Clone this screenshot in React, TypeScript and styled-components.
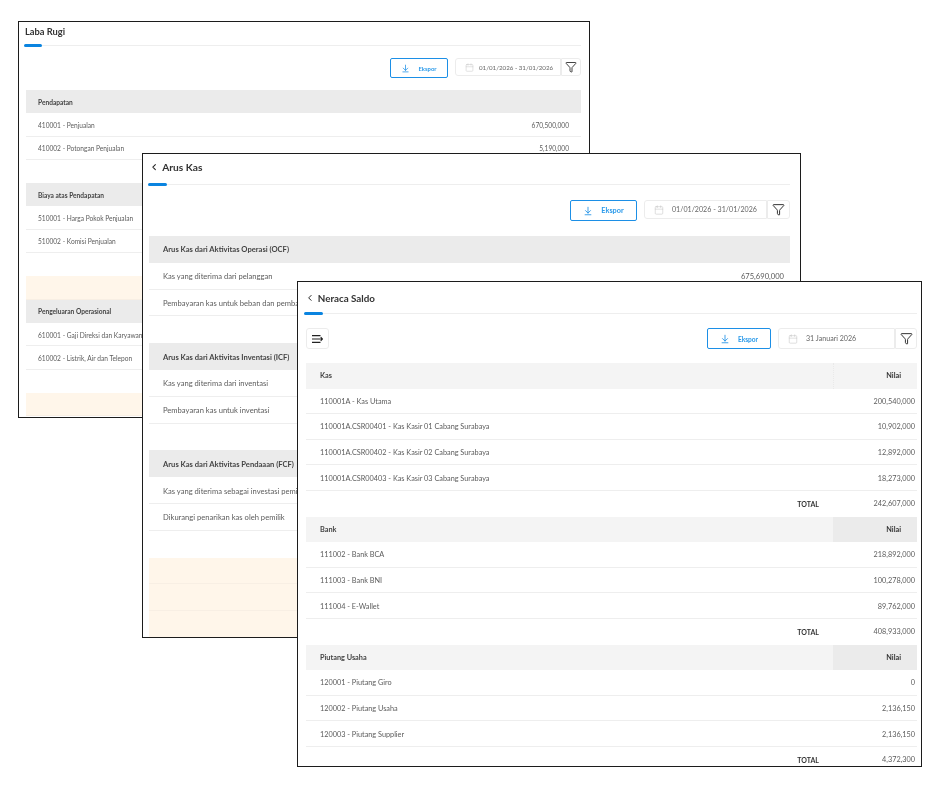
import React from 'react';
import styled, { createGlobalStyle } from 'styled-components';
import { ArrowDownToLine, Calendar, ChevronLeft, Funnel } from 'lucide-react';

const GlobalStyle = createGlobalStyle`
    html, body {
        margin: 0;
        padding: 0;
        background: #fff;
        font-family: Lato, "Open Sans", sans-serif;
    }
`;

interface Metrics
{
    x : number;
    y : number;
    w : number;
    h : number;
    row : number;
    font : number;
    title : number;
    titleH : number;
    titlePad : number;
    padL : number;
    padR : number;
    inset : number;
    cellPad : number;
    valuePad : number;
    toolTop : number;
    toolH : number;
    toolBottom : number;
    ekspor : number;
    eksporFont : number;
    date : number;
    dateFont : number;
    dateGap : number;
    dateTrim : number;
    filter : number;
    bar : number;
}

type RowData =
    | { kind : 'head'; label : string; nilai ?: 'plain' | 'dark' }
    | { kind : 'item'; label : string; value ?: string }
    | { kind : 'total'; value : string }
    | { kind : 'gap' }
    | { kind : 'peach' };

const Canvas = styled.div`
    position: relative;
    width: 940px;
    height: 786px;
    overflow: hidden;
`;

const Window = styled.section<{ $m : Metrics }>`
    position: absolute;
    left: ${p => p.$m.x}px;
    top: ${p => p.$m.y}px;
    width: ${p => p.$m.w}px;
    height: ${p => p.$m.h}px;
    box-sizing: border-box;
    display: flex;
    flex-direction: column;
    padding: 0 ${p => p.$m.padR}px 0 ${p => p.$m.padL}px;
    background: #fff;
    border: 1px solid #1c1c1c;
    overflow: hidden;
    color: #5c5c5c;
`;

const TitleBar = styled.header<{ $m : Metrics }>`
    position: relative;
    flex: none;
    display: flex;
    align-items: center;
    gap: 3px;
    box-sizing: border-box;
    height: ${p => p.$m.titleH}px;
    padding: 0 1px ${p => p.$m.titlePad}px;
    border-bottom: 1px solid #eeeeee;
    font-size: ${p => p.$m.title}px;
    font-weight: 700;
    color: #333;
    will-change: transform;

    &::after {
        content: '';
        position: absolute;
        left: 0;
        bottom: -2px;
        width: ${p => p.$m.bar}px;
        height: 3px;
        border-radius: 2px;
        background: #0a84e0;
    }
`;

const Back = styled(ChevronLeft)`
    flex: none;
    color: #222;
`;

const Toolbar = styled.div<{ $m : Metrics }>`
    flex: none;
    display: flex;
    align-items: stretch;
    height: ${p => p.$m.toolH}px;
    margin: ${p => p.$m.toolTop}px 0 ${p => p.$m.toolBottom}px ${p => p.$m.inset}px;
    will-change: transform;
`;

const MenuButton = styled.button`
    width: 23px;
    padding: 0;
    display: flex;
    align-items: center;
    justify-content: center;
    background: transparent;
    border: 1px solid #ececec;
    border-radius: 3px;
`;

const Spacer = styled.div`
    flex: 1;
`;

const ExportButton = styled.button<{ $m : Metrics }>`
    box-sizing: border-box;
    width: ${p => p.$m.ekspor}px;
    margin-right: 7px;
    padding: 0;
    display: flex;
    align-items: center;
    justify-content: center;
    gap: 8px;
    background: transparent;
    border: 1px solid #1c8fe6;
    border-radius: 2px;
    font-family: inherit;
    font-size: ${p => p.$m.eksporFont}px;
    font-weight: 700;
    color: #2b9aea;
`;

const DateField = styled.div<{ $m : Metrics }>`
    box-sizing: border-box;
    width: ${p => p.$m.date}px;
    margin-bottom: ${p => p.$m.dateTrim}px;
    display: flex;
    align-items: center;
    padding-left: 9px;
    gap: ${p => p.$m.dateGap}px;
    border: 1px solid #ececec;
    border-radius: 3px 0 0 3px;
    font-size: ${p => p.$m.dateFont}px;
    white-space: nowrap;
    color: #666;
`;

const FilterButton = styled.div<{ $m : Metrics }>`
    box-sizing: border-box;
    width: ${p => p.$m.filter}px;
    margin-bottom: ${p => p.$m.dateTrim}px;
    display: flex;
    align-items: center;
    justify-content: center;
    border: 1px solid #ececec;
    border-radius: 0 3px 3px 0;
    color: #222;
`;

const Table = styled.div<{ $m : Metrics }>`
    flex: none;
    display: flex;
    flex-direction: column;
    margin-left: ${p => p.$m.inset}px;
    will-change: transform;
`;

const BaseRow = styled.div<{ $m : Metrics }>`
    flex: none;
    box-sizing: border-box;
    height: ${p => p.$m.row}px;
    display: flex;
    align-items: center;
    font-size: ${p => p.$m.font}px;
    white-space: nowrap;
`;

const HeadRow = styled(BaseRow)<{ $light : boolean }>`
    padding-left: ${p => p.$m.cellPad}px;
    background: ${p => (p.$light ? '#f4f4f4' : '#ebebeb')};
    font-weight: 700;
    color: #444;
`;

const HeadLabel = styled.span`
    flex: 1;
`;

const NilaiCell = styled.span<{ $dark : boolean }>`
    align-self: stretch;
    box-sizing: border-box;
    width: 84px;
    display: flex;
    align-items: center;
    justify-content: flex-end;
    padding-right: 16px;
    background: ${p => (p.$dark ? '#ebebeb' : 'transparent')};
    border-left: ${p => (p.$dark ? 'none' : '1px dotted #e9e9e9')};
    color: #333;
`;

const ItemRow = styled(BaseRow)`
    padding: 1px ${p => p.$m.valuePad}px 0 ${p => p.$m.cellPad}px;
    border-bottom: 1px solid #eeeeee;
    justify-content: space-between;
`;

const TotalRow = styled(BaseRow)`
    justify-content: flex-end;
`;

const TotalLabel = styled.span`
    font-size: 7px;
    font-weight: 700;
    color: #333;
`;

const TotalValue = styled.span`
    box-sizing: border-box;
    width: 98px;
    padding-right: 2px;
    text-align: right;
`;

const GapRow = styled(BaseRow)``;

const PeachRow = styled(BaseRow)`
    background: #fff6ea;
    border-bottom: 1px solid #f8efe4;
`;

const labaRugi : Metrics = {
    x: 18, y: 21, w: 572, h: 397, row: 23.3, font: 6.6, title: 9.3, titleH: 24, titlePad: 4, padL: 5, padR: 8, inset: 2,
    cellPad: 12, valuePad: 12, toolTop: 12, toolH: 20, toolBottom: 12, ekspor: 58, eksporFont: 5.9, date: 106, dateFont: 6.2, dateGap: 5, dateTrim: 2, filter: 20, bar: 18,
};

const arusKas : Metrics = {
    x: 142, y: 153, w: 659, h: 485, row: 26.8, font: 7.6, title: 10.2, titleH: 31, titlePad: 4, padL: 5, padR: 10, inset: 1,
    cellPad: 14, valuePad: 6, toolTop: 15, toolH: 21, toolBottom: 15, ekspor: 67, eksporFont: 7.3, date: 123, dateFont: 7.1, dateGap: 8, dateTrim: 2, filter: 23, bar: 19,
};

const neracaSaldo : Metrics = {
    x: 297, y: 281, w: 625, h: 486, row: 25.6, font: 7.3, title: 9.8, titleH: 32, titlePad: 0, padL: 6, padR: 4, inset: 2,
    cellPad: 14, valuePad: 2, toolTop: 14, toolH: 21, toolBottom: 14, ekspor: 64, eksporFont: 6.6, date: 117, dateFont: 7.1, dateGap: 8, dateTrim: 0, filter: 22, bar: 19,
};

const labaRows : RowData[] = [
    { kind: 'head', label: 'Pendapatan' },
    { kind: 'item', label: '410001 - Penjualan', value: '670,500,000' },
    { kind: 'item', label: '410002 - Potongan Penjualan', value: '5,190,000' },
    { kind: 'gap' },
    { kind: 'head', label: 'Biaya atas Pendapatan' },
    { kind: 'item', label: '510001 - Harga Pokok Penjualan' },
    { kind: 'item', label: '510002 - Komisi Penjualan' },
    { kind: 'gap' },
    { kind: 'peach' },
    { kind: 'head', label: 'Pengeluaran Operasional' },
    { kind: 'item', label: '610001 - Gaji Direksi dan Karyawan' },
    { kind: 'item', label: '610002 - Listrik, Air dan Telepon' },
    { kind: 'gap' },
    { kind: 'peach' },
];

const arusRows : RowData[] = [
    { kind: 'head', label: 'Arus Kas dari Aktivitas Operasi (OCF)' },
    { kind: 'item', label: 'Kas yang diterima dari pelanggan', value: '675,690,000' },
    { kind: 'item', label: 'Pembayaran kas untuk beban dan pembayaran' },
    { kind: 'gap' },
    { kind: 'head', label: 'Arus Kas dari Aktivitas Inventasi (ICF)' },
    { kind: 'item', label: 'Kas yang diterima dari inventasi' },
    { kind: 'item', label: 'Pembayaran kas untuk inventasi' },
    { kind: 'gap' },
    { kind: 'head', label: 'Arus Kas dari Aktivitas Pendaaan (FCF)' },
    { kind: 'item', label: 'Kas yang diterima sebagai investasi pemilik' },
    { kind: 'item', label: 'Dikurangi penarikan kas oleh pemilik' },
    { kind: 'gap' },
    { kind: 'peach' },
    { kind: 'peach' },
    { kind: 'peach' },
];

const neracaRows : RowData[] = [
    { kind: 'head', label: 'Kas', nilai: 'plain' },
    { kind: 'item', label: '110001A - Kas Utama', value: '200,540,000' },
    { kind: 'item', label: '110001A.CSR00401 - Kas Kasir 01 Cabang Surabaya', value: '10,902,000' },
    { kind: 'item', label: '110001A.CSR00402 - Kas Kasir 02 Cabang Surabaya', value: '12,892,000' },
    { kind: 'item', label: '110001A.CSR00403 - Kas Kasir 03 Cabang Surabaya', value: '18,273,000' },
    { kind: 'total', value: '242,607,000' },
    { kind: 'head', label: 'Bank', nilai: 'dark' },
    { kind: 'item', label: '111002 - Bank BCA', value: '218,892,000' },
    { kind: 'item', label: '111003 - Bank BNI', value: '100,278,000' },
    { kind: 'item', label: '111004 - E-Wallet', value: '89,762,000' },
    { kind: 'total', value: '408,933,000' },
    { kind: 'head', label: 'Piutang Usaha', nilai: 'dark' },
    { kind: 'item', label: '120001 - Piutang Giro', value: '0' },
    { kind: 'item', label: '120002 - Piutang Usaha', value: '2,136,150' },
    { kind: 'item', label: '120003 - Piutang Supplier', value: '2,136,150' },
    { kind: 'total', value: '4,372,300' },
];

function SidebarIcon() : JSX.Element
{
    return (
        <svg width="11" height="8" viewBox="0 0 11 8" fill="none" stroke="#222" strokeWidth="1.1">
            <path d="M0 .6h8.5M0 4h6M0 7.4h8.5" />
            <path d="M6 4h4.5M8.7 2.2l1.8 1.8-1.8 1.8" />
        </svg>
    );
}

function Row({ row, m, light } : { row : RowData; m : Metrics; light : boolean }) : JSX.Element
{
    switch (row.kind)
    {
        case 'head':
            return (
                <HeadRow $m={m} $light={light}>
                    <HeadLabel>{row.label}</HeadLabel>
                    {row.nilai && <NilaiCell $dark={row.nilai === 'dark'}>Nilai</NilaiCell>}
                </HeadRow>
            );
        case 'item':
            return (
                <ItemRow $m={m}>
                    <span>{row.label}</span>
                    <span>{row.value}</span>
                </ItemRow>
            );
        case 'total':
            return (
                <TotalRow $m={m}>
                    <TotalLabel>TOTAL</TotalLabel>
                    <TotalValue>{row.value}</TotalValue>
                </TotalRow>
            );
        case 'gap':
            return <GapRow $m={m} />;
        default:
            return <PeachRow $m={m} />;
    }
}

interface ReportProps
{
    m : Metrics;
    title : string;
    range : string;
    rows : RowData[];
    back ?: boolean;
    menu ?: boolean;
    light ?: boolean;
}

function Report({ m, title, range, rows, back, menu, light } : ReportProps) : JSX.Element
{
    const icon = Math.round(m.font * 1.35);

    return (
        <Window $m={m}>
            <TitleBar $m={m}>
                {back && <Back size={m.title} strokeWidth={2.4} />}
                {title}
            </TitleBar>
            <Toolbar $m={m}>
                {menu && <MenuButton><SidebarIcon /></MenuButton>}
                <Spacer />
                <ExportButton $m={m}>
                    <ArrowDownToLine size={icon} strokeWidth={2} color="#1c8fe6" />
                    Ekspor
                </ExportButton>
                <DateField $m={m}>
                    <Calendar size={icon} strokeWidth={1.3} color="#c4c4c4" />
                    {range}
                </DateField>
                <FilterButton $m={m}>
                    <Funnel size={icon + 3} strokeWidth={1.7} />
                </FilterButton>
            </Toolbar>
            <Table $m={m}>
                {rows.map((row, i) => <Row key={i} row={row} m={m} light={!!light} />)}
            </Table>
        </Window>
    );
}

export default function App() : JSX.Element
{
    return (
        <Canvas>
            <GlobalStyle />
            <Report m={labaRugi} title="Laba Rugi" range="01/01/2026 - 31/01/2026" rows={labaRows} />
            <Report m={arusKas} title="Arus Kas" range="01/01/2026 - 31/01/2026" rows={arusRows} back />
            <Report m={neracaSaldo} title="Neraca Saldo" range="31 Januari 2026" rows={neracaRows} back menu light />
        </Canvas>
    );
}
